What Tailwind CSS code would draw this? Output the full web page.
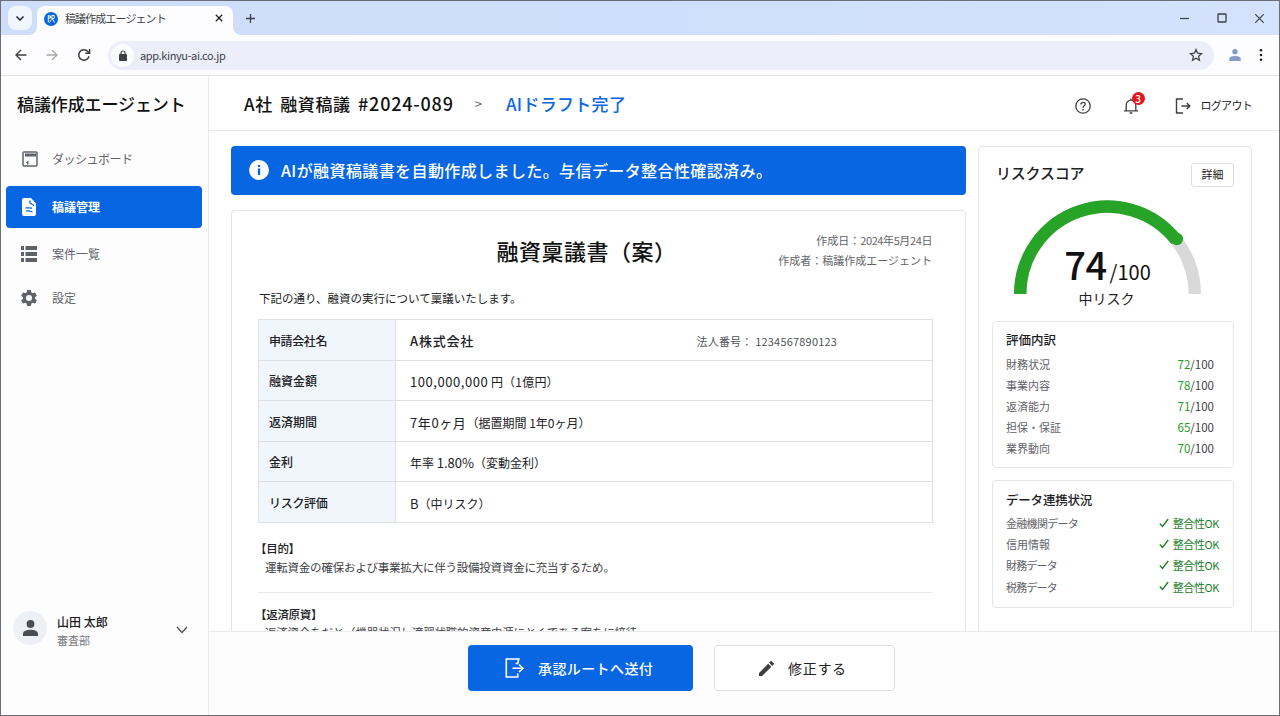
<!DOCTYPE html>
<html lang="ja">

<head>
    <meta charset="UTF-8">
    <meta name="viewport" content="width=device-width, initial-scale=1.0">
    <script src="https://cdn.jsdelivr.net/npm/@tailwindcss/browser@4"></script>
    <title>稿議作成エージェント</title>
</head>

<body class="font-['Noto_Sans_CJK_JP',sans-serif] text-[#202124]">
    <div class="flex flex-col w-[1280px] h-[716px] overflow-hidden bg-white border border-[#6b6e74] whitespace-nowrap">

        <!-- Tab strip -->
        <div class="flex h-[34px] shrink-0 bg-linear-to-r from-[#cfdefa] via-[#cddffc] to-[#d4e2fd]">
            <div class="w-6 h-6 mt-[5px] ml-[7px] rounded-lg bg-[#f1f5fe] flex items-center justify-center">
                <svg class="w-2.5 h-2.5" viewBox="0 0 10 10" fill="none" stroke="#202124" stroke-width="1.5"><path d="M1.5 3.5 5 7l3.5-3.5" /></svg>
            </div>
            <div class="relative flex items-center w-[196px] h-[29px] mt-[5px] ml-[5px] pl-[7px] pb-[4px] rounded-t-lg bg-[#fdfdff]">
                <svg class="absolute -left-2 bottom-0 w-2 h-2" viewBox="0 0 8 8"><path d="M8 0v8H0a8 8 0 0 0 8-8z" fill="#fdfdff" /></svg>
                <svg class="absolute -right-2 bottom-0 w-2 h-2" viewBox="0 0 8 8"><path d="M0 0v8h8A8 8 0 0 1 0 0z" fill="#fdfdff" /></svg>
                <svg class="w-[14px] h-[14px]" viewBox="0 0 14 14" fill="none" stroke="#fff">
                    <circle cx="7" cy="7" r="7" fill="#0a66e0" stroke="none" />
                    <path d="M4.300 3.300v7M4.300 4h2.200v2H4.300M7.800 3.500h2.400v3H7.800zM7.500 7.500 5.500 10.500M8.500 7l2 3.500" />
                </svg>
                <span class="ml-[7px] text-[11px] tracking-[-0.9px] text-[#3c4043]">稿議作成エージェント</span>
                <svg class="w-2 h-2 absolute left-[178px] top-[8px]" viewBox="0 0 8 8" stroke="#202124" stroke-width="1.3"><path d="m.8.8 6.4 6.4M7.2.8.8 7.2" /></svg>
            </div>
            <svg class="w-[9px] h-[9px] mt-[13px] ml-[13px]" viewBox="0 0 9 9" stroke="#3c4043" stroke-width="1.3"><path d="M4.5 0v9M0 4.5h9" /></svg>
            <div class="flex items-center ml-auto mr-[15px] gap-7">
                <svg class="w-[9px] h-[9px]" viewBox="0 0 9 9" stroke="#3c4043" stroke-width="1.2"><path d="M0 4.5h9" /></svg>
                <svg class="w-[10px] h-[10px]" viewBox="0 0 10 10" fill="none" stroke="#3c4043" stroke-width="1.3"><rect x="1" y="1" width="8" height="8" rx=".5" /></svg>
                <svg class="w-[9px] h-[9px]" viewBox="0 0 9 9" stroke="#3c4043" stroke-width="1.2"><path d="m.3.3 8.4 8.4M8.7.3.3 8.7" /></svg>
            </div>
        </div>

        <!-- Address bar -->
        <div class="flex items-center h-[41px] shrink-0 bg-[#fdfdff] border-b border-[#e3e4e8]">
            <svg class="w-3 h-3 ml-[14px]" viewBox="0 0 12 12" fill="none" stroke="#3c4043" stroke-width="1.4"><path d="M11.5 6H1.2M6 1 1 6l5 5" /></svg>
            <svg class="w-3 h-3 ml-[19px]" viewBox="0 0 12 12" fill="none" stroke="#a4a7ab" stroke-width="1.3"><path d="M.5 6h10.3M6 1l5 5-5 5" /></svg>
            <svg class="w-[14px] h-[14px] ml-[19px]" viewBox="0 0 14 14" fill="none" stroke="#3c4043" stroke-width="1.5"><path d="M12 8.2A5.2 5.2 0 1 1 10.9 3.6L12.5 5.2M12.6 1v4.3H8.3" /></svg>
            <div class="flex items-center w-[1106px] h-[29px] ml-[17px] pl-[3px] pr-[11px] rounded-full bg-[#eceffa]">
                <div class="flex items-center justify-center w-[23px] h-[23px] rounded-full bg-[#fdfdff]">
                    <svg class="w-2 h-[11px]" viewBox="0 0 8 11"><rect y="4" width="8" height="7" rx="1" fill="#3c4043" /><path d="M2 4.5V3a2 2 0 0 1 4 0v1.5" fill="none" stroke="#3c4043" stroke-width="1.2" /></svg>
                </div>
                <span class="ml-[6px] text-[11px] tracking-[-0.37px] text-[#3c4043] pt-px">app.kinyu-ai.co.jp</span>
                <svg class="w-[14px] h-[14px] ml-auto" viewBox="0 0 14 14" fill="none" stroke="#3c4043" stroke-width="1.2"><path d="m7 1.5 1.6 3.7 4 .4-3 2.7.9 4L7 10.2l-3.5 2.1.9-4-3-2.7 4-.4z" /></svg>
            </div>
            <svg class="w-3 h-3 ml-[15px]" viewBox="0 0 12 12" fill="#869cc6"><circle cx="6" cy="2.8" r="2.7" /><path d="M.3 12V9.8C.3 7.7 3.5 7 6 7s5.7.7 5.7 2.8V12z" /></svg>
            <svg class="w-1 h-3 ml-[18px]" viewBox="0 0 4 12" fill="#202124"><circle cx="2" cy="1.3" r="1.3" /><circle cx="2" cy="6" r="1.3" /><circle cx="2" cy="10.7" r="1.3" /></svg>
        </div>

        <div class="flex flex-1 min-h-0">
            <!-- Sidebar -->
            <aside class="flex flex-col w-[208px] shrink-0 border-r border-[#e9eaec] bg-[#fdfdfe]">
                <h1 class="h-[58px] pl-4 leading-[56px] text-[17px] font-medium tracking-[-0.1px] text-[#111]">稿議作成エージェント</h1>
                <nav class="flex flex-col text-[12px] text-[#5f6368]">
                    <a href="#" class="flex items-center h-[52px] pl-[21px] pb-[3px]">
                        <svg class="w-4 h-4" viewBox="0 0 16 16"><rect x="1" y="1" width="14" height="14" rx="1" fill="none" stroke="#5f6368" stroke-width="1.5" /><path d="M3 2.5h11V5.500H3zM3.500 12l3-2.500V13.500H5V12z" fill="#5f6368" /></svg>
                        <span class="ml-[14px] tracking-[-0.5px]">ダッシュボード</span>
                    </a>
                    <a href="#" class="flex items-center h-[42px] w-[196px] ml-[5px] pl-[16px] rounded bg-[#0866e2] text-white font-bold">
                        <svg class="w-[14px] h-[18px]" viewBox="0 0 14 18"><path d="M2 0h7l5 5.500V16a2 2 0 0 1-2 2H2a2 2 0 0 1-2-2V2a2 2 0 0 1 2-2z" fill="#fff" /><path d="M8 2.500V5l4 2.500M3.500 9.800h3l3.500.4M4 12.800h3l3.500 1.200" fill="none" stroke="#0866e2" stroke-width="1.3" /></svg>
                        <span class="ml-[16px]">稿議管理</span>
                    </a>
                    <a href="#" class="flex items-center h-[52px] pl-[20px]">
                        <svg class="w-4 h-4" viewBox="0 0 16 16" fill="#5f6368"><path d="M0 0h3v4H0zM4.500 0H16v4H4.500zM0 6h3v4H0zM4.500 6H16v4H4.500zM0 12h3v4H0zM4.500 12H16v4H4.500z" /></svg>
                        <span class="ml-[15px]">案件一覧</span>
                    </a>
                    <a href="#" class="flex items-center h-[36px] pl-[18px]">
                        <svg class="w-5 h-5" viewBox="0 0 24 24" fill="#5f6368"><path d="M19.140 12.940c.040-.3.060-.610.060-.940 0-.320-.020-.640-.070-.940l2.030-1.580a.490.490 0 0 0 .120-.610l-1.920-3.320a.488.488 0 0 0-.590-.220l-2.390.960c-.5-.380-1.030-.7-1.620-.940l-.360-2.540a.484.484 0 0 0-.480-.410h-3.840c-.240 0-.430.170-.470.410l-.360 2.540c-.590.240-1.130.570-1.620.940l-2.390-.960c-.220-.080-.470 0-.590.220L2.740 8.870c-.120.210-.080.470.120.610l2.030 1.580c-.050.3-.090.630-.090.940s.020.640.070.940l-2.030 1.580a.490.490 0 0 0-.120.610l1.920 3.320c.120.220.370.290.590.220l2.390-.960c.5.380 1.030.7 1.620.940l.360 2.540c.050.240.240.410.480.410h3.840c.240 0 .440-.170.470-.410l.360-2.540c.590-.240 1.130-.560 1.620-.940l2.390.960c.220.080.470 0 .590-.220l1.920-3.320c.120-.220.070-.470-.120-.610zM12 15.600a3.600 3.600 0 1 1 0-7.200 3.600 3.600 0 0 1 0 7.200z" /></svg>
                        <span class="ml-[13px]">設定</span>
                    </a>
                </nav>
                <div class="flex items-center mt-auto mb-[66px] pl-3 pr-5">
                    <div class="flex items-center justify-center w-[34px] h-[34px] rounded-full bg-[#edf0f5]">
                        <svg class="w-[15px] h-4" viewBox="0 0 15 16" fill="#4a4e54"><circle cx="7.5" cy="4" r="3.9" /><path d="M0 16v-2.200C0 10.800 4 9.800 7.500 9.800s7.500 1 7.500 4V16z" /></svg>
                    </div>
                    <div class="ml-[10px] pt-[6px] leading-[18px]">
                        <p class="text-[12px] font-medium">山田 太郎</p>
                        <p class="text-[11px] text-[#75787d]">審査部</p>
                    </div>
                    <svg class="w-3 h-2 ml-auto mt-[3px]" viewBox="0 0 12 8" fill="none" stroke="#4a4e54" stroke-width="1.2"><path d="m1 1 5 5.500L11 1" /></svg>
                </div>
            </aside>

            <div class="flex flex-col flex-1 min-w-0">
                <!-- Page header -->
                <header class="flex items-center h-[55px] shrink-0 pl-[35px] pr-[27px] border-b border-[#e9eaec]">
                    <span class="text-[17px] font-medium tracking-[0.6px] [word-spacing:3px] text-[#111] pt-px">A社 融資稿議 <span class="text-[18px] tracking-[0.8px]">#2024-089</span></span>
                    <span class="ml-[21px] pt-px text-[13px] text-[#5f6368]">&gt;</span>
                    <span class="ml-[24px] pt-px text-[17px] font-medium tracking-[0.3px] text-[#0b66e4]">AIドラフト完了</span>
                    <div class="flex items-center ml-auto pt-[5px]">
                        <svg class="w-4 h-4" viewBox="0 0 16 16" fill="none" stroke="#3c4043" stroke-width="1.3"><circle cx="8" cy="8" r="7.2" /><path d="M5.900 6.500c0-3 4.300-2.800 4.300-.3C10.200 7.800 8 7.900 8 9.800M8 11v1.400" /></svg>
                        <div class="relative ml-[32px]">
                            <svg class="w-4 h-4" viewBox="0 0 16 16" fill="none" stroke="#3c4043" stroke-width="1.3"><path d="M1 12.800h14M3.200 12.500V7a4.800 4.800 0 0 1 9.600 0v5.500M8 2V.5" /><path d="M6.500 14.300h3A1.600 1.600 0 0 1 8 16a1.600 1.600 0 0 1-1.500-1.700z" fill="#3c4043" stroke="none" /></svg>
                            <span class="absolute -top-[6px] left-[9px] w-[13px] h-[13px] rounded-full bg-[#e3141b] text-white text-[10px] leading-[13px] text-center font-medium">3</span>
                        </div>
                        <svg class="w-4 h-4 ml-[36px]" viewBox="0 0 16 16" fill="none" stroke="#3c4043" stroke-width="1.4"><path d="M8 1H1.500v14H8M6.500 8h8M11.800 5l3 3-3 3" /></svg>
                        <span class="ml-[10px] text-[11px] tracking-[-0.7px]">ログアウト</span>
                    </div>
                </header>

                <!-- Content -->
                <main class="flex items-start flex-1 min-h-0 overflow-hidden gap-3 pt-[15px] pl-[22px]">
                    <div class="w-[735px] shrink-0">
                        <div class="flex items-center h-[49px] pl-[18px] pb-px rounded bg-[#0866e2] text-white">
                            <svg class="w-5 h-5" viewBox="0 0 20 20"><circle cx="10" cy="10" r="10" fill="#fff" /><path d="M8.900 5h2.300v2H8.900zM8.900 8.400h2.300V15H8.900z" fill="#0866e2" /></svg>
                            <span class="ml-3 text-[16px] font-medium tracking-[0.4px]">AIが融資稿議書を自動作成しました。与信データ整合性確認済み。</span>
                        </div>

                        <section class="relative h-[520px] mt-[15px] px-[26px] border border-[#e2e4e7] rounded">
                            <h2 class="pt-[23px] pr-[24px] text-center text-[22px] leading-8 font-medium tracking-[0.5px] text-[#111]">融資稟議書（案）</h2>
                            <div class="absolute top-[19px] right-[33px] text-right text-[11px] leading-5 text-[#5f6368]">
                                <p>作成日：<span class="tracking-[-0.4px]">2024年5月24日</span></p>
                                <p>作成者：稿議作成エージェント</p>
                            </div>
                            <p class="mt-[22px] ml-[1px] text-[11.5px] leading-5">下記の通り、融資の実行について稟議いたします。</p>

                            <table class="w-[675px] mt-[11px] border-collapse text-[12px]">
                                <tr class="h-[40.5px]">
                                    <th class="w-[137px] pt-[2px] pl-[10px] text-left font-medium tracking-[-0.4px] bg-[#f1f6fc] border border-[#dde1e7]">申請会社名</th>
                                    <td class="w-[301px] pt-[2px] pl-[14px] border-y border-[#dde1e7] text-[13px] font-medium tracking-[0.8px]">A株式会社</td>
                                    <td class="pt-[2px] border-y border-r border-[#dde1e7] text-[11px] tracking-[0.2px] text-[#4f5358]">法人番号： 1234567890123</td>
                                </tr>
                                <tr class="h-[40.5px]">
                                    <th class="pt-[2px] pl-[10px] text-left font-medium bg-[#f1f6fc] border border-[#dde1e7]">融資金額</th>
                                    <td colspan="2" class="pt-[3px] pl-[14px] border border-[#dde1e7]"><span class="text-[13px] tracking-[0.55px]">100,000,000</span> <span class="tracking-[0.2px]">円（1億円）</span></td>
                                </tr>
                                <tr class="h-[40.5px]">
                                    <th class="pt-[2px] pl-[10px] text-left font-medium bg-[#f1f6fc] border border-[#dde1e7]">返済期間</th>
                                    <td colspan="2" class="pt-[3px] pl-[14px] border border-[#dde1e7]"><span class="text-[13px] tracking-[0.6px]">7年0ヶ月</span>（据置期間 1年0ヶ月）</td>
                                </tr>
                                <tr class="h-[40.5px]">
                                    <th class="pt-[2px] pl-[10px] text-left font-medium bg-[#f1f6fc] border border-[#dde1e7]">金利</th>
                                    <td colspan="2" class="pt-[2px] pl-[14px] border border-[#dde1e7]">年率 <span class="text-[13px]">1.80%</span>（変動金利）</td>
                                </tr>
                                <tr class="h-[40.5px]">
                                    <th class="pt-[2px] pl-[10px] text-left font-medium tracking-[-0.3px] bg-[#f1f6fc] border border-[#dde1e7]">リスク評価</th>
                                    <td colspan="2" class="pt-[3px] pl-[14px] border border-[#dde1e7]"><span class="text-[13px]">B</span>（中リスク）</td>
                                </tr>
                            </table>

                            <div class="w-[675px] mt-[16px] pb-[14px] border-b border-[#e9eaec] text-[11.5px] leading-[19.5px]">
                                <h3 class="-ml-[3px] font-medium tracking-[-0.3px]">【目的】</h3>
                                <p class="pl-[7px] tracking-[-0.22px] text-[#3c4043]">運転資金の確保および事業拡大に伴う設備投資資金に充当するため。</p>
                            </div>
                            <div class="mt-[12px] text-[11.5px] leading-[19.5px]">
                                <h3 class="-ml-[3px] font-medium tracking-[-0.3px]">【返済原資】</h3>
                                <p class="pl-[7px] -mt-px tracking-[-0.2px] text-[#3c4043]">返済資金をだと（機器状況し適習状職的資産由源にとくである案をに接待</p>
                            </div>
                        </section>
                    </div>

                    <!-- Risk score panel -->
                    <aside class="w-[274px] h-[540px] shrink-0 px-[13px] border border-[#e2e4e7] rounded">
                        <div class="flex items-center justify-between h-[24px] mt-[16px] pl-1 pr-[4px]">
                            <h2 class="-mt-[3px] text-[15px] font-medium tracking-[-0.2px]">リスクスコア</h2>
                            <button class="w-[43px] h-6 pb-px border border-[#dcdee2] rounded-[3px] text-[11px]">詳細</button>
                        </div>
                        <div class="relative w-[187px] h-[94px] mt-[13px] ml-[22px]">
                            <svg class="w-[187px] h-[94px]" viewBox="0 0 187 94" fill="none" stroke-width="12.4">
                                <path d="M6.200 94a87.300 87.300 0 0 1 174.600 0" stroke="#d9d9d9" />
                                <path d="M6.200 94A87.300 87.300 0 0 1 162.300 40.200" stroke="#27a427" />
                                <circle cx="162.8" cy="39" r="6.2" fill="#27a427" />
                            </svg>
                            <div class="absolute top-[46px] inset-x-0 flex items-baseline justify-center leading-[36px] text-[#111]">
                                <span class="text-[38px] font-medium tracking-[-0.5px]">74</span><span class="ml-[3px] text-[20px] leading-[20px]">/100</span>
                            </div>
                        </div>
                        <p class="mt-[-6px] text-center text-[14px] leading-[20px] pr-[17px]">中リスク</p>

                        <div class="w-[242px] h-[147px] mt-[13px] pt-[7px] pl-[13px] pr-[19px] border border-[#e5e7ea] rounded text-[11px]">
                            <h3 class="text-[12.5px] leading-[22px] font-medium">評価内訳</h3>
                            <ul class="mt-[2.5px] leading-[21.2px] text-[#5f6368]">
                                <li class="flex justify-between">財務状況<span class="text-[11.5px] text-[#3c4043]"><b class="font-normal text-[#1f9a1f]">72</b>/100</span></li>
                                <li class="flex justify-between">事業内容<span class="text-[11.5px] text-[#3c4043]"><b class="font-normal text-[#1f9a1f]">78</b>/100</span></li>
                                <li class="flex justify-between">返済能力<span class="text-[11.5px] text-[#3c4043]"><b class="font-normal text-[#1f9a1f]">71</b>/100</span></li>
                                <li class="flex justify-between">担保・保証<span class="text-[11.5px] text-[#3c4043]"><b class="font-normal text-[#1f9a1f]">65</b>/100</span></li>
                                <li class="flex justify-between">業界動向<span class="text-[11.5px] text-[#3c4043]"><b class="font-normal text-[#1f9a1f]">70</b>/100</span></li>
                            </ul>
                        </div>

                        <div class="w-[242px] h-[128px] mt-[12px] pt-[8px] pl-[13px] pr-[14px] border border-[#e5e7ea] rounded text-[11px]">
                            <h3 class="text-[12.5px] leading-[22px] font-medium tracking-[-0.2px]">データ連携状況</h3>
                            <ul class="mt-[2px] leading-[21.2px] text-[#5f6368]">
                                <li class="flex justify-between"><span class="tracking-[-0.7px]">金融機関データ</span><span class="flex items-center gap-[4px] tracking-[-0.4px] text-[#1a801f]"><svg class="w-[10px] h-[10px] -mt-0.5" viewBox="0 0 10 10" fill="none" stroke="#1a801f" stroke-width="1.3"><path d="M.8 5.500 3.500 8.500 9.200 1" /></svg>整合性OK</span></li>
                                <li class="flex justify-between">信用情報<span class="flex items-center gap-[4px] tracking-[-0.4px] text-[#1a801f]"><svg class="w-[10px] h-[10px] -mt-0.5" viewBox="0 0 10 10" fill="none" stroke="#1a801f" stroke-width="1.3"><path d="M.8 5.500 3.500 8.500 9.200 1" /></svg>整合性OK</span></li>
                                <li class="flex justify-between"><span class="tracking-[-0.8px]">財務データ</span><span class="flex items-center gap-[4px] tracking-[-0.4px] text-[#1a801f]"><svg class="w-[10px] h-[10px] -mt-0.5" viewBox="0 0 10 10" fill="none" stroke="#1a801f" stroke-width="1.3"><path d="M.8 5.500 3.500 8.500 9.200 1" /></svg>整合性OK</span></li>
                                <li class="flex justify-between"><span class="tracking-[-0.8px]">税務データ</span><span class="flex items-center gap-[4px] tracking-[-0.4px] text-[#1a801f]"><svg class="w-[10px] h-[10px] -mt-0.5" viewBox="0 0 10 10" fill="none" stroke="#1a801f" stroke-width="1.3"><path d="M.8 5.500 3.500 8.500 9.200 1" /></svg>整合性OK</span></li>
                            </ul>
                        </div>
                    </aside>
                </main>

                <!-- Action bar -->
                <footer class="flex h-[84px] shrink-0 pt-[13px] pl-[259px] gap-[21px] border-t border-[#e9eaec] bg-[#fdfdfe]">
                    <button class="flex items-center w-[225px] h-[46px] pl-[37px] rounded bg-[#0866e2] text-white text-[14px] font-medium">
                        <svg class="w-[19px] h-5" viewBox="0 0 19 20" fill="none" stroke="#fff" stroke-width="1.6"><path d="M10.500 5.500h2.200L13.800 1H1.300v18h11.400v-3.500M7.500 10.300h10M14 6.500l3.800 3.800-3.800 3.800" /></svg>
                        <span class="ml-[14px] tracking-[0.4px]">承認ルートへ送付</span>
                    </button>
                    <button class="flex items-center w-[181px] h-[46px] pl-[44px] rounded border border-[#dcdfe3] bg-white text-[14px]">
                        <svg class="w-[15px] h-[15px]" viewBox="3 3 18 18" fill="#3c4043"><path d="M3 17.250V21h3.750L17.810 9.940l-3.750-3.750zM20.710 7.040a1 1 0 0 0 0-1.410l-2.340-2.340a1 1 0 0 0-1.410 0l-1.830 1.830 3.750 3.750z" /></svg>
                        <span class="ml-[14px] tracking-[0.7px]">修正する</span>
                    </button>
                </footer>
            </div>
        </div>
    </div>
</body>

</html>
